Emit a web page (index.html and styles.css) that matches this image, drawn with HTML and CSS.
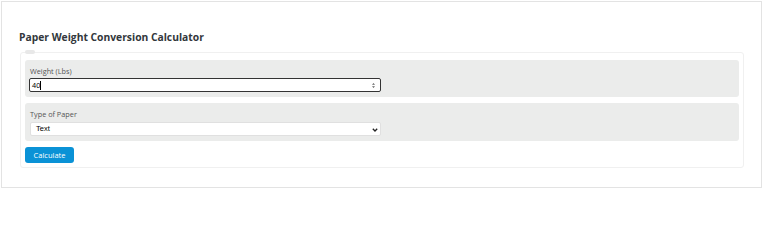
FILE: index.html
```html
<!DOCTYPE html>
<html>
<head>
<meta charset="utf-8">
<link rel="stylesheet" href="styles.css">
</head>
<body>
<div class="page">
  <h2 class="title">Paper Weight Conversion Calculator</h2>
  <div class="calc">
    <div class="legend"></div>
    <div class="row">
      <label class="label">Weight (Lbs)</label>
      <div class="input focused"><span class="value">40</span><span class="caret"></span>
        <svg class="spin" width="5" height="7" viewBox="0 0 5 7"><path d="M1 2.8 L2.5 1 L4 2.8 Z M1 4.2 L2.5 6 L4 4.2 Z" fill="#666"/></svg>
      </div>
    </div>
    <div class="row tall">
      <label class="label">Type of Paper</label>
      <div class="input select"><span class="value">Text</span>
        <svg class="chev" width="6" height="4" viewBox="0 0 6 4"><path d="M0.8 0.8 L3 3 L5.2 0.8" fill="none" stroke="#222" stroke-width="1.3"/></svg>
      </div>
    </div>
    <button class="btn">Calculate</button>
  </div>
</div>
</body>
</html>
```
FILE: styles.css
```css
html, body { margin: 0; padding: 0; background: #fff; }
body { font-family: "Open Sans", "Noto Sans", sans-serif; }
.page {
  margin: 1px 0 0 1px;
  width: 761px;
  height: 187px;
  box-sizing: border-box;
  border: 1px solid #e3e3e3;
  padding: 28px 17px 0 18px;
}
.title {
  margin: 0 0 0 -1px;
  font-size: 10.3px;
  line-height: 15px;
  font-weight: 700;
  color: #32373c;
}
.calc {
  position: relative;
  margin-top: 7px;
  border: 1px solid #f0f0f0;
  border-radius: 3px;
  padding: 7px 4px 4px 4px;
  height: 116px;
  box-sizing: border-box;
}
.legend {
  position: absolute;
  left: 4px;
  top: -3px;
  width: 10px;
  height: 4px;
  border-radius: 2px;
  background: #e8e8e8;
}
.row {
  background: #ebeceb;
  border-radius: 3px;
  padding: 6px 5px 5px 4px;
  margin-bottom: 6px;
  display: flex;
  flex-direction: column;
  height: 37px;
  box-sizing: border-box;
}
.row.tall { height: 38px; }
.label {
  font-size: 7.3px;
  line-height: 10px;
  color: #555;
  margin-left: 1px;
  height: 13px;
}
.input {
  width: 352px;
  height: 14px;
  box-sizing: border-box;
  background: #fff;
  border-radius: 2px;
  display: flex;
  align-items: center;
  font-family: "Liberation Sans", Arial, sans-serif;
  font-size: 7.5px;
  color: #000;
  position: relative;
}
.focused {
  border: 1.5px solid #333;
  padding-left: 2px;
}
.caret {
  width: 1px;
  height: 9px;
  background: #000;
}
.spin {
  position: absolute;
  right: 4px;
  top: 2.5px;
}
.select {
  margin-left: 1px;
  width: 351px;
  height: 15px;
  border: 1px solid #e0e0e0;
  padding-left: 5px;
}
.chev {
  position: absolute;
  right: 2px;
  top: 5px;
}
.btn {
  display: block;
  width: 49px;
  height: 16px;
  border: none;
  border-radius: 3px;
  background: #0a92d6;
  color: #fff;
  font-family: "Open Sans", "Noto Sans", sans-serif;
  font-size: 7.5px;
  padding: 0;
}
```
